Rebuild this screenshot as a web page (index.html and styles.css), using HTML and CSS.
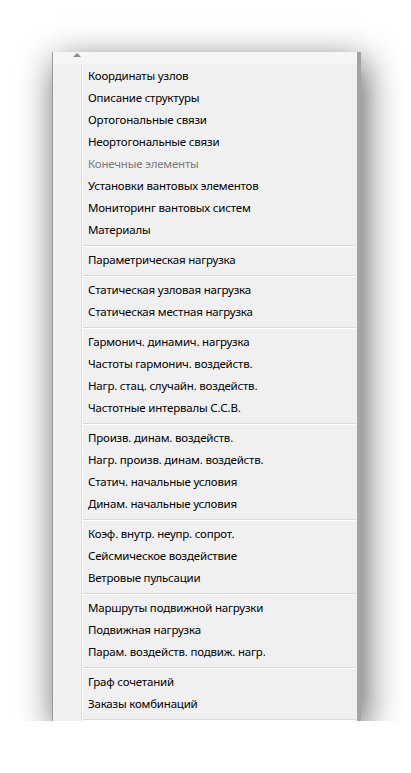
FILE: index.html
```html
<!DOCTYPE html>
<html lang="ru">
<head>
    <meta charset="UTF-8">
    <meta name="viewport" content="width=device-width, initial-scale=1.0">
    <title>Меню исходных данных</title>
    <link rel="stylesheet" href="styles.css">
</head>
<body>
    <div class="menu">
        <div class="scroll-up"><span class="arrow"></span></div>
        <div class="menu-body">
            <div class="gutter"></div>
            <ul class="items">
                <li>Координаты узлов</li>
                <li>Описание структуры</li>
                <li>Ортогональные связи</li>
                <li>Неортогональные связи</li>
                <li class="disabled">Конечные элементы</li>
                <li>Установки вантовых элементов</li>
                <li>Мониторинг вантовых систем</li>
                <li>Материалы</li>
                <li class="sep"></li>
                <li>Параметрическая нагрузка</li>
                <li class="sep"></li>
                <li>Статическая узловая нагрузка</li>
                <li>Статическая местная нагрузка</li>
                <li class="sep"></li>
                <li>Гармонич. динамич. нагрузка</li>
                <li>Частоты гармонич. воздейств.</li>
                <li>Нагр. стац. случайн. воздейств.</li>
                <li>Частотные интервалы С.С.В.</li>
                <li class="sep"></li>
                <li>Произв. динам. воздейств.</li>
                <li>Нагр. произв. динам. воздейств.</li>
                <li>Статич. начальные условия</li>
                <li>Динам. начальные условия</li>
                <li class="sep"></li>
                <li>Коэф. внутр. неупр. сопрот.</li>
                <li>Сейсмическое воздействие</li>
                <li>Ветровые пульсации</li>
                <li class="sep"></li>
                <li>Маршруты подвижной нагрузки</li>
                <li>Подвижная нагрузка</li>
                <li>Парам. воздейств. подвиж. нагр.</li>
                <li class="sep"></li>
                <li>Граф сочетаний</li>
                <li>Заказы комбинаций</li>
                <li class="sep last"></li>
            </ul>
        </div>
    </div>
</body>
</html>
```

FILE: styles.css
```css
body {
    margin: 0;
    padding: 52px 0 0 52px;
    background: #fff;
    font-family: "Noto Sans", Arial, sans-serif;
    font-size: 11.5px;
    letter-spacing: -0.2px;
    color: #000;
}
.menu {
    width: 304px;
    background: #f0f0f0;
    border-left: 1px solid #9a9a9a;
    border-right: 4px solid #a3a3a3;
    box-shadow: 4px 10px 34px rgba(0, 0, 0, 0.65);
}
.scroll-up {
    height: 12px;
    background: #f6f6f6;
    padding-left: 20px;
}
.arrow {
    display: block;
    width: 0;
    height: 0;
    padding-top: 1px;
    border-left: 4px solid transparent;
    border-right: 4px solid transparent;
    border-bottom: 4px solid #8c8c8c;
}
.menu-body {
    display: flex;
}
.gutter {
    width: 28px;
    border-right: 1px solid #e2e3e3;
    box-shadow: 1px 0 0 #fff;
}
.items {
    list-style: none;
    margin: 0;
    padding: 0 0 0 1px;
    flex: 1;
}
.items li {
    height: 22px;
    line-height: 23px;
    padding-left: 5px;
    white-space: nowrap;
}
.items li.disabled {
    color: #7b7b7b;
}
.items li.sep {
    height: 1px;
    padding: 0;
    margin: 5px 2px 1px 0;
    background: #d7d7d7;
    border-bottom: 1px solid #fff;
}
.items li.sep.last {
    margin-bottom: 0;
}
```
